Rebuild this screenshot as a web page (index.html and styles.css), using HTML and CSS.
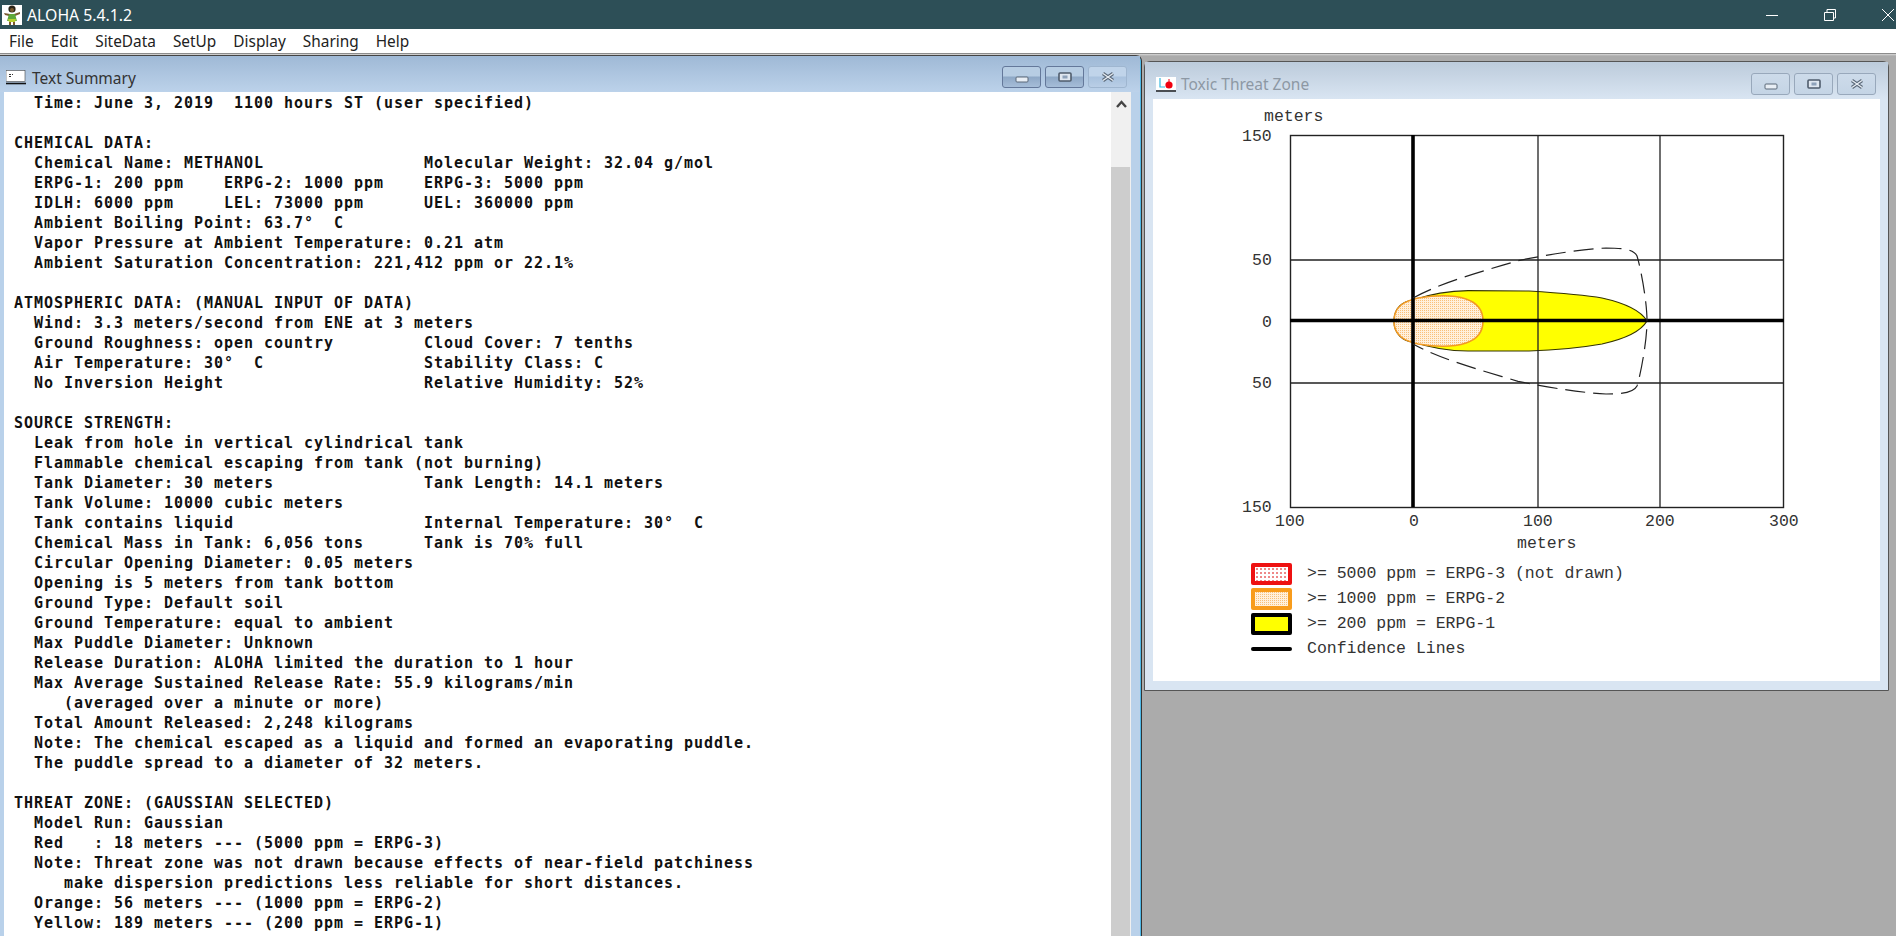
FILE: index.html
```html
<!DOCTYPE html>
<html>
<head>
  <meta charset="utf-8">
  <title>ALOHA 5.4.1.2</title>
  <link rel="stylesheet" href="styles.css">
</head>
<body>
  <svg class="defs" width="0" height="0">
    <symbol id="g-min" viewBox="0 0 14 8"><rect x="1" y="1" width="12" height="5" rx="1" fill="#e8eef5" stroke="#5a6878"/></symbol>
    <symbol id="g-max" viewBox="0 0 14 10"><rect x="1" y="1" width="12" height="8" rx="1" fill="#dfe7f0" stroke="#4f5c6c" stroke-width="1.6"/><rect x="4.5" y="3.5" width="5" height="3" fill="#8ea2ba"/></symbol>
    <symbol id="g-close" viewBox="0 0 14 10"><path d="M2 1.5 L12 8.5 M12 1.5 L2 8.5" stroke="#5a6878" stroke-width="3.4"/><path d="M2 1.5 L12 8.5 M12 1.5 L2 8.5" stroke="#e6ecf3" stroke-width="1.4"/></symbol>
  </svg>

  <div class="app-title">
    <svg class="app-icon" viewBox="0 0 20 20">
      <rect width="20" height="20" fill="#fff"/>
      <circle cx="10" cy="4" r="3.6" fill="#2a2418"/>
      <circle cx="10" cy="5" r="2" fill="#7a5a30"/>
      <path d="M2 8 L8 9 L12 9 L18 7 L18 9 L13 11 L7 11 L3 10 Z" fill="#7a5a30"/>
      <path d="M7 9 L13 9 L15 16 L5 16 Z" fill="#5fa83a"/>
      <path d="M6 14 L14 14 L13 17 L7 17 Z" fill="#b8d030"/>
      <path d="M7 17 L9 17 L9 20 L7 20 Z M11 17 L13 17 L13 20 L11 20 Z" fill="#7a5a30"/>
    </svg>
    <span class="app-name">ALOHA 5.4.1.2</span>
    <div class="sys-btns">
      <svg width="12" height="12" viewBox="0 0 12 12"><path d="M0 6.5 H12" stroke="#fff"/></svg>
      <svg width="12" height="12" viewBox="0 0 12 12"><path d="M0.5 3.5 H9.5 V11.5 H0.5 Z M3 3.5 V0.5 H11.5 V9 H9.5" fill="none" stroke="#fff"/></svg>
      <svg width="12" height="12" viewBox="0 0 12 12"><path d="M0 0 L12 12 M12 0 L0 12" stroke="#fff"/></svg>
    </div>
  </div>

  <ul class="menu">
    <li>File</li>
    <li>Edit</li>
    <li>SiteData</li>
    <li>SetUp</li>
    <li>Display</li>
    <li>Sharing</li>
    <li>Help</li>
  </ul>

  <div class="desktop">
    <div class="win win-text">
      <div class="win-bar">
        <svg class="win-icon" viewBox="0 0 20 14">
          <rect x="0" y="0" width="19" height="11" fill="#fff" stroke="#444" stroke-width="0.6"/>
          <path d="M3 4 H5 M6 4 H7 M3 6 H5" stroke="#333"/>
          <path d="M0 13 H20" stroke="#111" stroke-width="1.6"/>
        </svg>
        <span class="win-name">Text Summary</span>
        <div class="mdi-btns">
          <div class="mdi-btn"><svg width="14" height="8" class="glyph-low"><use href="#g-min"/></svg></div>
          <div class="mdi-btn"><svg width="14" height="10"><use href="#g-max"/></svg></div>
          <div class="mdi-btn mdi-close"><svg width="14" height="10"><use href="#g-close"/></svg></div>
        </div>
      </div>
      <div class="win-body">
<pre class="summary">  Time: June 3, 2019  1100 hours ST (user specified)

CHEMICAL DATA:
  Chemical Name: METHANOL                Molecular Weight: 32.04 g/mol
  ERPG-1: 200 ppm    ERPG-2: 1000 ppm    ERPG-3: 5000 ppm
  IDLH: 6000 ppm     LEL: 73000 ppm      UEL: 360000 ppm
  Ambient Boiling Point: 63.7°  C
  Vapor Pressure at Ambient Temperature: 0.21 atm
  Ambient Saturation Concentration: 221,412 ppm or 22.1%

ATMOSPHERIC DATA: (MANUAL INPUT OF DATA)
  Wind: 3.3 meters/second from ENE at 3 meters
  Ground Roughness: open country         Cloud Cover: 7 tenths
  Air Temperature: 30°  C                Stability Class: C
  No Inversion Height                    Relative Humidity: 52%

SOURCE STRENGTH:
  Leak from hole in vertical cylindrical tank
  Flammable chemical escaping from tank (not burning)
  Tank Diameter: 30 meters               Tank Length: 14.1 meters
  Tank Volume: 10000 cubic meters
  Tank contains liquid                   Internal Temperature: 30°  C
  Chemical Mass in Tank: 6,056 tons      Tank is 70% full
  Circular Opening Diameter: 0.05 meters
  Opening is 5 meters from tank bottom
  Ground Type: Default soil
  Ground Temperature: equal to ambient
  Max Puddle Diameter: Unknown
  Release Duration: ALOHA limited the duration to 1 hour
  Max Average Sustained Release Rate: 55.9 kilograms/min
     (averaged over a minute or more)
  Total Amount Released: 2,248 kilograms
  Note: The chemical escaped as a liquid and formed an evaporating puddle.
  The puddle spread to a diameter of 32 meters.

THREAT ZONE: (GAUSSIAN SELECTED)
  Model Run: Gaussian
  Red   : 18 meters --- (5000 ppm = ERPG-3)
  Note: Threat zone was not drawn because effects of near-field patchiness
     make dispersion predictions less reliable for short distances.
  Orange: 56 meters --- (1000 ppm = ERPG-2)
  Yellow: 189 meters --- (200 ppm = ERPG-1)</pre>
        <div class="scrollbar">
          <svg class="scroll-up" width="11" height="8" viewBox="0 0 11 8"><path d="M1 7 L5.5 2 L10 7" fill="none" stroke="#444" stroke-width="2.4"/></svg>
          <div class="scroll-thumb"></div>
        </div>
      </div>
    </div>

    <div class="win win-threat">
      <div class="win-bar">
        <svg class="win-icon" viewBox="0 0 20 15">
          <rect width="20" height="13" fill="#fff"/>
          <path d="M4 1 V10 H9" fill="none" stroke="#35b8e0" stroke-width="1.2"/>
          <circle cx="13" cy="8" r="3.6" fill="#f00010"/>
          <path d="M13 2 V5" stroke="#f00010"/>
          <path d="M0 14 H20" stroke="#111" stroke-width="1.4"/>
        </svg>
        <span class="win-name">Toxic Threat Zone</span>
        <div class="mdi-btns">
          <div class="mdi-btn"><svg width="14" height="8" class="glyph-low"><use href="#g-min"/></svg></div>
          <div class="mdi-btn"><svg width="14" height="10"><use href="#g-max"/></svg></div>
          <div class="mdi-btn"><svg width="14" height="10"><use href="#g-close"/></svg></div>
        </div>
      </div>
      <div class="chart-body">
        <svg class="chart" width="726" height="456" viewBox="1153 99 726 456">
          <defs>
            <pattern id="dots" width="2" height="2" patternUnits="userSpaceOnUse">
              <rect width="2" height="2" fill="#fff0dc"/>
              <rect width="1" height="1" fill="#f9c07a"/>
            </pattern>
          </defs>
          <g class="labels">
            <text x="1264" y="121">meters</text>
            <text x="1242" y="141">150</text>
            <text x="1252" y="265">50</text>
            <text x="1262" y="327">0</text>
            <text x="1252" y="388">50</text>
            <text x="1242" y="512">150</text>
            <text x="1275" y="526">100</text>
            <text x="1409" y="526">0</text>
            <text x="1523" y="526">100</text>
            <text x="1645" y="526">200</text>
            <text x="1769" y="526">300</text>
            <text x="1517" y="548">meters</text>
          </g>
          <rect x="1290.5" y="135.5" width="493" height="372" fill="#fff" stroke="#222" stroke-width="1.4"/>
          <path class="plume" d="M1394 321 C1394 308 1403 301 1413 300 C1428 295 1448 291 1468 290.7 L1529 291 C1560 293 1585 295 1602 298 C1620 302 1640 309 1647 321 C1640 333 1620 340 1602 344 C1585 347 1560 350 1529 351 L1468 351 C1448 351 1428 347 1413 342 C1403 341 1394 334 1394 321 Z"/>
          <path class="zone" d="M1394 321 C1394 306 1405 301 1418 298 C1436 295 1454 295 1466 299 C1478 303 1483 310 1483 321 C1483 332 1478 339 1466 343 C1454 347 1436 347 1418 344 C1405 341 1394 336 1394 321 Z"/>
          <path d="M1538 135 V507 M1660 135 V507 M1290 260 H1784 M1290 383 H1784" stroke="#222" stroke-width="1.3"/>
          <path d="M1413 135 V507" stroke="#000" stroke-width="3.6"/>
          <path d="M1290 320.5 H1784" stroke="#000" stroke-width="3.6"/>
          <path class="conf" d="M1413 298 C1440 283 1480 272 1518 260.7 C1550 254 1585 249 1606 248 C1625 248 1634 250 1637 256 C1640 265 1647 300 1647 321 C1647 342 1640 377 1637 386 C1634 392 1625 394 1606 394 C1585 393 1550 388 1518 381.3 C1480 370 1440 359 1413 344"/>
        </svg>
        <div class="legend">
          <div class="legend-row"><span class="swatch swatch-red"></span><span>&gt;= 5000 ppm = ERPG-3 (not drawn)</span></div>
          <div class="legend-row"><span class="swatch swatch-orange"></span><span>&gt;= 1000 ppm = ERPG-2</span></div>
          <div class="legend-row"><span class="swatch swatch-yellow"></span><span>&gt;= 200 ppm = ERPG-1</span></div>
          <div class="legend-row"><span class="swatch-line"></span><span>Confidence Lines</span></div>
        </div>
      </div>
    </div>
  </div>
</body>
</html>
```

FILE: styles.css
```css
*{margin: 0;padding: 0;box-sizing: border-box;}
ul{list-style: none;}
html, body{
  height: 100%;
  width: 100%;
  overflow: hidden;
  background-color: #ababab;
  font-family: "Noto Sans", "Open Sans", sans-serif;
}
.defs{
  position: absolute;
}
.app-title{
  height: 29px;
  background-color: #2d4f57;
  color: #fff;
  display: flex;
  align-items: center;
  padding-left: 2px;
}
.app-icon{
  width: 20px;
  height: 20px;
}
.app-name{
  margin-left: 5px;
  font-size: 15.8px;
}
.sys-btns{
  margin-left: auto;
  margin-right: 2px;
  display: flex;
  gap: 46px;
}
.menu{
  height: 25px;
  background-color: #fff;
  border-bottom: 1px solid #8c8c8c;
  display: flex;
  align-items: center;
  gap: 17px;
  padding-left: 9px;
  font-size: 15.4px;
  color: #222;
}
.desktop{
  position: relative;
  height: 882px;
  overflow: hidden;
  background: linear-gradient(#d8d8d8, #ababab 2px);
}
.win{
  position: absolute;
}
.win-text{
  left: 0;
  top: 1px;
  width: 1142px;
  height: 900px;
  background-color: #b9d1ea;
  border-top: 1px solid #444;
  border-right: 1px solid #333;
  border-top-right-radius: 6px;
  box-shadow: inset -1px 0 0 #4fb8e6;
}
.win-threat{
  left: 1144px;
  top: 7px;
  width: 745px;
  height: 630px;
  background-color: #d9e5f2;
  border: 1px solid #555;
  border-top-right-radius: 6px;
  border-top-left-radius: 6px;
  padding: 0 8px 9px 8px;
  display: flex;
  flex-direction: column;
}
.win-bar{
  display: flex;
  align-items: center;
  position: relative;
  padding-top: 7px;
}
.win-text .win-bar{
  height: 36px;
  padding-left: 6px;
  margin-right: 1px;
  background: linear-gradient(#9fb9d6, #bcd2ea);
}
.win-threat .win-bar{
  height: 37px;
  flex-shrink: 0;
  margin: 0 -8px;
  padding-left: 11px;
  background: linear-gradient(#bccbdb, #d9e5f2);
}
.win-icon{
  width: 20px;
  height: 15px;
}
.win-name{
  margin-left: 6px;
  font-size: 15.5px;
  color: #333;
}
.win-threat .win-name{
  color: #8d98a4;
  margin-left: 5px;
}
.mdi-btns{
  position: absolute;
  display: flex;
  gap: 4px;
}
.win-text .mdi-btns{
  right: 13px;
  top: 10px;
}
.win-threat .mdi-btns{
  right: 12px;
  top: 11px;
}
.mdi-btn{
  width: 39px;
  height: 22px;
  border: 1px solid #64789a;
  border-radius: 3px;
  background: linear-gradient(#b7cde3, #b7cde3 45%, #8ea8c6 50%, #a6bdd8);
  display: flex;
  align-items: center;
  justify-content: center;
}
.mdi-close{
  border-color: #9fb6d0;
  background: linear-gradient(#c0d4ea, #c0d4ea 45%, #a9c2de 50%, #b9cee6);
}
.win-threat .mdi-btn{
  border-color: #98a8bb;
  background: linear-gradient(#cddbea, #c4d4e5);
}
.glyph-low{
  margin-top: 5px;
}
.win-body{
  background-color: #fff;
  margin: 0 10px 0 4px;
  display: flex;
  height: 864px;
}
.summary{
  flex: 1;
  font-family: "DejaVu Sans Mono", monospace;
  font-weight: bold;
  font-size: 15px;
  letter-spacing: 0.97px;
  line-height: 20px;
  color: #111;
  padding: 1px 0 0 10px;
  overflow: hidden;
}
.scrollbar{
  width: 20px;
  background-color: #f0f0f0;
  display: flex;
  flex-direction: column;
  align-items: center;
}
.scroll-up{
  margin-top: 8px;
}
.scroll-thumb{
  width: 19px;
  margin-top: 59px;
  margin-right: 1px;
  flex: 1;
  background-color: #cdcdcd;
}
.chart-body{
  flex: 1;
  background-color: #fff;
}
.chart{
  display: block;
}
.labels text{
  font-family: "Liberation Mono", monospace;
  font-size: 16.5px;
  fill: #333;
}
.plume{
  fill: #ffff00;
  stroke: #333300;
  stroke-width: 1.2;
}
.zone{
  fill: url(#dots);
  stroke: #f29a22;
  stroke-width: 1.6;
}
.conf{
  fill: none;
  stroke: #222;
  stroke-width: 1.2;
  stroke-dasharray: 20 8;
}
.legend{
  padding: 6px 0 0 98px;
  display: flex;
  flex-direction: column;
  font-family: "Liberation Mono", monospace;
  font-size: 16.5px;
  color: #333;
}
.legend-row{
  height: 25px;
  display: flex;
  align-items: center;
  gap: 15px;
}
.swatch{
  width: 41px;
  height: 22px;
  border: 4px solid;
  border-radius: 2px;
}
.swatch-red{
  border-color: #ee1111;
  background: radial-gradient(#e88 0.8px, #fff 1px) 0 0 / 4px 4px;
}
.swatch-orange{
  border-color: #f89c1c;
  background: repeating-conic-gradient(#f9c07a 0 25%, #fff0dc 0 100%) 0 0 / 2px 2px;
}
.swatch-yellow{
  border-color: #000;
  background-color: #ffff00;
}
.swatch-line{
  width: 41px;
  height: 4px;
  background-color: #000;
  border-radius: 2px;
}
```
